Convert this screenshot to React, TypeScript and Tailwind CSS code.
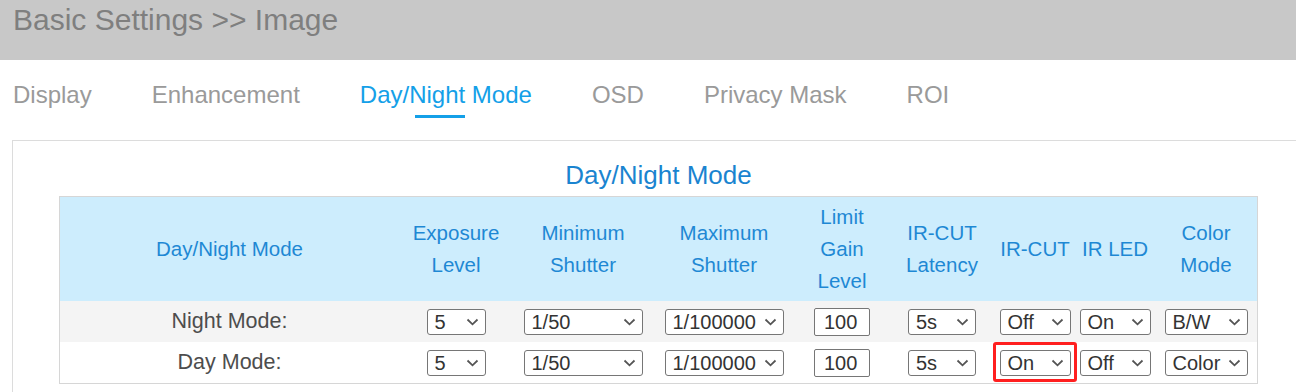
const font = { fontFamily: '"Liberation Sans", Arial, sans-serif' };

const tabs = ["Display", "Enhancement", "Day/Night Mode", "OSD", "Privacy Mask", "ROI"];

const cols = [
  ["Day/Night Mode"],
  ["Exposure", "Level"],
  ["Minimum", "Shutter"],
  ["Maximum", "Shutter"],
  ["Limit", "Gain", "Level"],
  ["IR-CUT", "Latency"],
  ["IR-CUT"],
  ["IR LED"],
  ["Color", "Mode"],
];

type Cell = { kind: "select"; value: string; w: string } | { kind: "input"; value: string };

const rows: { label: string; bg: string; cells: Cell[] }[] = [
  {
    label: "Night Mode:",
    bg: "bg-[#f4f4f4]",
    cells: [
      { kind: "select", value: "5", w: "w-[59px]" },
      { kind: "select", value: "1/50", w: "w-[119px]" },
      { kind: "select", value: "1/100000", w: "w-[119px]" },
      { kind: "input", value: "100" },
      { kind: "select", value: "5s", w: "w-[68px]" },
      { kind: "select", value: "Off", w: "w-[71px]" },
      { kind: "select", value: "On", w: "w-[71px]" },
      { kind: "select", value: "B/W", w: "w-[83px]" },
    ],
  },
  {
    label: "Day Mode:",
    bg: "bg-white",
    cells: [
      { kind: "select", value: "5", w: "w-[59px]" },
      { kind: "select", value: "1/50", w: "w-[119px]" },
      { kind: "select", value: "1/100000", w: "w-[119px]" },
      { kind: "input", value: "100" },
      { kind: "select", value: "5s", w: "w-[68px]" },
      { kind: "select", value: "On", w: "w-[71px]" },
      { kind: "select", value: "Off", w: "w-[71px]" },
      { kind: "select", value: "Color", w: "w-[83px]" },
    ],
  },
];

const Chevron = () => (
  <svg width="13" height="8" viewBox="0 0 13 8" className="shrink-0">
    <path d="M1.5 1.5 L6.5 6.3 L11.5 1.5" fill="none" stroke="#555" strokeWidth="1.8" />
  </svg>
);

const FakeSelect = ({ value, w }: { value: string; w: string }) => (
  <div
    className={`${w} h-[26px] flex items-center justify-between pl-[7px] pr-[6px] border border-[#767676] rounded-[3px] bg-white text-[20px] leading-none text-[#333] overflow-hidden`}
  >
    <span className="whitespace-nowrap">{value}</span>
    <Chevron />
  </div>
);

export default function App() {
  return (
    <div style={font} className="w-[1296px] h-[392px] overflow-hidden bg-white">
      {/* page header */}
      <div className="h-[60px] bg-[#c8c8c8] pl-[13px] pt-[3px]">
        <span className="text-[30px] leading-[34px] text-[#7f7f7f]">Basic Settings &gt;&gt; Image</span>
      </div>

      {/* tabs */}
      <div className="flex items-start gap-[60px] pl-[13px] pt-[21px]">
        {tabs.map((t) => {
          const active = t === "Day/Night Mode";
          return (
            <div key={t} className="flex flex-col">
              <span className={`text-[24px] leading-[28px] whitespace-nowrap ${active ? "text-[#14a0e8]" : "text-[#9a9a9a]"}`}>
                {t}
              </span>
              {active && <div className="ml-[55px] mt-[6px] w-[50px] h-[3px] bg-[#14a0e8]" />}
            </div>
          );
        })}
      </div>

      {/* panel */}
      <div className="ml-[12px] mt-[22px] w-[1294px] border border-[#dcdcdc] px-[46px] pt-[19px] pb-[20px]">
        <div className="w-[1199px] text-center text-[26px] leading-[30px] text-[#1a84d0] mb-[6px]">Day/Night Mode</div>

        <div className="w-[1199px] border border-[#d6d6d6]">
          <div className="grid grid-cols-[339px_114px_140px_142px_94px_106px_80px_80px_102px] h-[104px] bg-[#cdedfd] text-[20.5px] leading-[32px] text-[#1e88d4]">
            {cols.map((lines, i) => (
              <div key={i} className="flex flex-col items-center justify-center text-center whitespace-nowrap">
                {lines.map((l) => (
                  <span key={l}>{l}</span>
                ))}
              </div>
            ))}
          </div>

          {rows.map((r, ri) => (
            <div
              key={r.label}
              className={`grid grid-cols-[339px_114px_140px_142px_94px_106px_80px_80px_102px] h-[41px] ${r.bg}`}
            >
              <div className="flex items-center justify-center text-[21.5px] text-[#4d4d4d]">{r.label}</div>
              {r.cells.map((c, ci) => (
                <div key={ci} className="relative flex items-center justify-center">
                  {c.kind === "select" ? (
                    <FakeSelect value={c.value} w={c.w} />
                  ) : (
                    <div className="w-[56px] h-[28px] flex items-center pl-[9px] border border-[#767676] rounded-[2px] bg-white text-[20px] leading-none text-[#333]">
                      {c.value}
                    </div>
                  )}
                  {ri === 1 && ci === 5 && (
                    <div className="absolute left-[-2px] top-0 w-[84px] h-[40px] border-[3px] border-[#ff1f1f] rounded-[3px]" />
                  )}
                </div>
              ))}
            </div>
          ))}
        </div>
      </div>
    </div>
  );
}
